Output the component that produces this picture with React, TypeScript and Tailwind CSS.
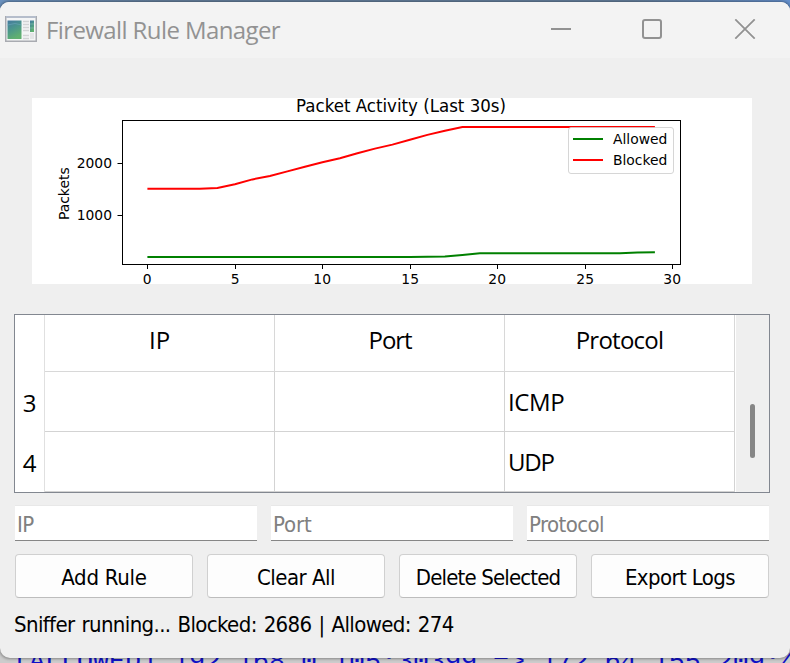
import React from "react";

const ui = "font-['Open_Sans','Noto_Sans',sans-serif]";
const shell = "font-['DejaVu_Sans_Condensed','DejaVu_Sans',sans-serif] [font-stretch:condensed]";

const blocked = [
  188.8, 188.8, 188.8, 188.8, 188, 184.2, 179.4, 176, 171.4, 166.8, 162.3, 158.3, 153.3, 148.6, 144.6,
  139.7, 134.9, 130.7, 127, 127, 127, 127, 127, 127, 127, 127, 127, 127, 126.9, 126.9,
];
const allowed = [
  257, 257, 257, 257, 257, 257, 257, 257, 257, 257, 257, 257, 257, 257, 257, 256.9, 256.7, 256.5, 255,
  253.3, 253.3, 253.3, 253.3, 253.3, 253.3, 253.3, 253.3, 253.2, 252.6, 252.3,
];
const toPoints = (ys: number[]) => ys.map((y, i) => `${147.4 + i * 17.5},${y}`).join(" ");

function Chart() {
  return (
    <svg
      className="ml-8 block h-[186px] w-[720px] overflow-visible bg-white font-['DejaVu_Sans',sans-serif]"
      viewBox="32 98 720 186"
      fontSize="13.89"
    >
      <text x="401" y="112" fontSize="17" textAnchor="middle" textLength="210" lengthAdjust="spacingAndGlyphs">Packet Activity (Last 30s)</text>
      <polyline points={toPoints(allowed)} fill="none" stroke="#008000" strokeWidth="2" />
      <polyline points={toPoints(blocked)} fill="none" stroke="#ff0000" strokeWidth="2" />
      <rect x="122.5" y="120.5" width="558" height="144" fill="none" stroke="#000" />
      {[147.5, 235.5, 322.5, 410.5, 497.5, 585.5, 672.5].map((x, i) => (
        <g key={x}>
          <path d={`M${x} 264v5`} stroke="#000" />
          <text x={x - 0.3} y="284" textAnchor="middle">{i * 5}</text>
        </g>
      ))}
      {[[2000, 163.5], [1000, 215.5]].map(([v, y]) => (
        <g key={v}>
          <path d={`M117.5 ${y}h5`} stroke="#000" />
          <text x="112" y={y + 4.8} textAnchor="end">{v}</text>
        </g>
      ))}
      <text transform="translate(69 193.7) rotate(-90)" textAnchor="middle">Packets</text>
      <rect x="568.5" y="127.5" width="105" height="46" rx="2.5" fill="#fff" fillOpacity="0.8" stroke="#ccc" strokeOpacity="0.8" />
      <path d="M573 139h30" stroke="#008000" strokeWidth="2" />
      <path d="M573 160h30" stroke="#ff0000" strokeWidth="2" />
      <text x="613" y="144">Allowed</text>
      <text x="613" y="165">Blocked</text>
    </svg>
  );
}

function AppIcon() {
  return (
    <svg className="h-[26px] w-8 shrink-0" viewBox="0 0 32 26">
      <defs>
        <linearGradient id="pane" x1="0" y1="0" x2="0.4" y2="1">
          <stop offset="0" stopColor="#4579a0" />
          <stop offset="0.5" stopColor="#4a968c" />
          <stop offset="1" stopColor="#60b070" />
        </linearGradient>
      </defs>
      <rect x="0.75" y="0.75" width="30.5" height="24.5" fill="#f4f5f6" stroke="#a9abb1" strokeWidth="1.5" />
      <path d="M1 1h30" stroke="#b5bdcb" strokeWidth="2" />
      <rect x="2.5" y="4.5" width="14" height="18.5" fill="url(#pane)" />
      <path d="M2.5 9q8-3 14 0" stroke="#6da5bc" strokeOpacity="0.6" fill="none" />
      <path d="M18 5.5h6M18 8.5h6M18 11.5h6M18 14.5h6M18 19.5h6M18 22.5h6" stroke="#d2d3d5" strokeWidth="1.3" />
      <rect x="25" y="4.5" width="4" height="11.5" fill="url(#pane)" />
      <path d="M25 8h4M25 12h4" stroke="#8bc2b4" strokeWidth="0.6" />
      <rect x="25" y="17" width="4" height="6" fill="#e4e5e7" />
    </svg>
  );
}

function TitleBar() {
  return (
    <header className="flex h-14 items-start bg-[#f3f3f3] pl-[5px]">
      <div className="pt-[14px]"><AppIcon /></div>
      <h1 className={`ml-[9px] mt-[12px] w-[460px] whitespace-nowrap text-2xl leading-8 tracking-[-0.6px] text-[#929292] ${ui}`}>
        Firewall Rule Manager
      </h1>
      <svg className="ml-[45px] mt-[17px] h-5 w-[205px] shrink-0" viewBox="551 19 205 20" fill="none" stroke="#929292">
        <path d="M551 29h20" strokeWidth="2" />
        <rect x="643" y="20" width="18" height="18" rx="2" strokeWidth="2" />
        <path d="M735.3 19.3l19.4 19.4M754.7 19.3l-19.4 19.4" strokeWidth="1.7" />
      </svg>
    </header>
  );
}

const columns = [
  { name: "IP", header: "tracking-normal", input: "tracking-[-0.5px]" },
  { name: "Port", header: "tracking-[-1.1px] pl-px", input: "tracking-[-0.1px]" },
  { name: "Protocol", header: "tracking-[-0.75px]", input: "tracking-[-0.6px]" },
];
const rules = [
  { id: 3, cells: ["", "", "ICMP"], spacing: "tracking-[-0.4px]" },
  { id: 4, cells: ["", "", "UDP"], spacing: "tracking-[-1.2px]" },
];

function RuleTable() {
  return (
    <section className={`ml-[14px] mt-[30px] flex h-[179px] w-[756px] border border-[#828790] bg-white text-2xl leading-8 text-black ${ui}`}>
      <div className="w-[30px] shrink-0 border-r border-[#e0e0e0] pt-[57px]">
        {rules.map((r) => (
          <div key={r.id} className="flex h-[60px] items-center justify-center pt-px">{r.id}</div>
        ))}
      </div>
      <div className="grid w-[690px] shrink-0 grid-cols-3 grid-rows-[57px_60px_60px]">
        {columns.map((c) => (
          <div key={c.name} className={`flex justify-center border-r border-b border-[#d8d8d8] pt-[9px] ${c.header}`}>{c.name}</div>
        ))}
        {rules.map((r) =>
          r.cells.map((cell, i) => (
            <div key={`${r.id}-${i}`} className={`flex items-center border-r border-b border-[#d3d3d3] pl-[3px] ${r.spacing}`}>{cell}</div>
          )),
        )}
      </div>
      <div className="ml-px flex-1 bg-[#efefef] pt-[89px] pl-[14px]">
        <div className="h-[54px] w-[5px] rounded-full bg-[#868686]" />
      </div>
    </section>
  );
}

const buttons = [
  { label: "Add Rule", spacing: "tracking-[-0.25px]" },
  { label: "Clear All", spacing: "tracking-[-0.5px]" },
  { label: "Delete Selected", spacing: "tracking-[-0.85px]" },
  { label: "Export Logs", spacing: "tracking-[-0.6px]" },
];

export default function App() {
  return (
    <div className="flex h-[663px] w-[790px] flex-col overflow-hidden bg-[linear-gradient(90deg,#6b92bf,#66819f_20%,#66819f_80%,#6590cc)] pt-[2px]">
      <div className="z-10 flex h-[656px] shrink-0 flex-col">
        <main className="h-[656px] overflow-hidden rounded-t-[9px] rounded-b-[10px] bg-[#efefef] shadow-[0_0_3px_1px_rgba(0,0,0,0.35)]">
          <TitleBar />
          <div className="h-10" />
          <Chart />
          <RuleTable />
          <div className={`ml-[15px] mt-[12px] flex gap-[14px] text-[22px] ${shell}`}>
            {columns.map((c) => (
              <div key={c.name} className={`h-[36px] w-[242px] border-t border-b border-t-[#e8e8e8] border-b-[#868686] bg-white pl-[2px] leading-[37px] text-[#808080] ${c.input}`}>
                {c.name}
              </div>
            ))}
          </div>
          <div className={`ml-[15px] mt-[13px] flex gap-[14px] text-[22px] text-black ${shell}`}>
            {buttons.map((b) => (
              <button key={b.label} className={`h-[44px] w-[178px] rounded-[4px] border border-[#d0d0d0] border-b-[#bdbdbd] bg-[#fdfdfd] pt-[3px] leading-[38px] whitespace-nowrap ${b.spacing}`}>
                {b.label}
              </button>
            ))}
          </div>
          <p className={`ml-[14px] mt-[11px] text-[22px] leading-8 tracking-[-0.62px] [word-spacing:1.3px] whitespace-nowrap text-black ${shell}`}>
            Sniffer running... Blocked: 2686 | Allowed: 274
          </p>
        </main>
      </div>
      <div className="-mt-[10px] h-[15px] shrink-0 overflow-hidden bg-[#cccccc]">
        <div className="-mt-[2px] pl-[13px] font-['Liberation_Mono',monospace] text-[26.66px] leading-[32px] whitespace-pre text-[#1010c8]">
          [ALLOWED] 192.168.0.105:30399 =&gt; 172.64.155.209:443
        </div>
      </div>
    </div>
  );
}
